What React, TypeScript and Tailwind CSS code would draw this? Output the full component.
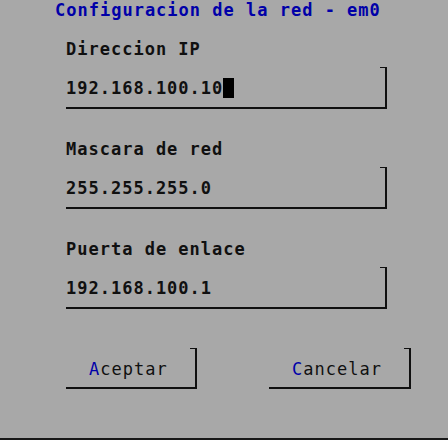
import React from "react";

// DOS-style network config dialog (em0)

const mono = "font-['DejaVu_Sans_Mono','Liberation_Mono',monospace] text-[17px] leading-[20px] tracking-[1px]";

function Field({ label, value, cursor }: { label: string; value: string; cursor?: boolean }) {
  return (
    <div className="flex flex-col">
      <div className={`${mono} font-bold text-[#101010] h-[20px]`}>{label}</div>
      <div className="relative mt-[8px] w-[321px] h-[42px] border-r-2 border-b-2 border-[#101010] pt-[11px]">
        <span className="absolute right-0 top-0 w-[5px] h-px bg-[#101010]" />
        <div className={`${mono} font-bold text-[#101010] flex items-center`}>
          <span>{value}</span>
          {cursor && <span className="inline-block w-[11px] h-[20px] bg-black" />}
        </div>
      </div>
    </div>
  );
}

function Button({ label, width }: { label: string; width: string }) {
  return (
    <div className={`relative ${width} h-[41px] border-r-2 border-b-2 border-[#101010] pt-[9px] pl-[23px]`}>
      <span className="absolute right-0 top-0 w-[5px] h-px bg-[#101010]" />
      <span className={`${mono} text-[#101010]`}>
        <span className="text-[#0000a8]">{label[0]}</span>
        {label.slice(1)}
      </span>
    </div>
  );
}

export default function App() {
  return (
    <div className="w-[448px] h-[440px] bg-[#a8a8a8] border-b-2 border-[#181818] flex flex-col">
      <div className={`${mono} font-bold text-[#0000a8] pl-[55px]`}>Configuracion de la red - em0</div>
      <div className="pl-[66px] pt-[19px] flex flex-col gap-[30px]">
        <Field label="Direccion IP" value="192.168.100.10" cursor />
        <Field label="Mascara de red" value="255.255.255.0" />
        <Field label="Puerta de enlace" value="192.168.100.1" />
      </div>
      <div className="pl-[66px] pt-[39px] flex gap-[72px]">
        <Button label="Aceptar" width="w-[131px]" />
        <Button label="Cancelar" width="w-[142px]" />
      </div>
    </div>
  );
}
